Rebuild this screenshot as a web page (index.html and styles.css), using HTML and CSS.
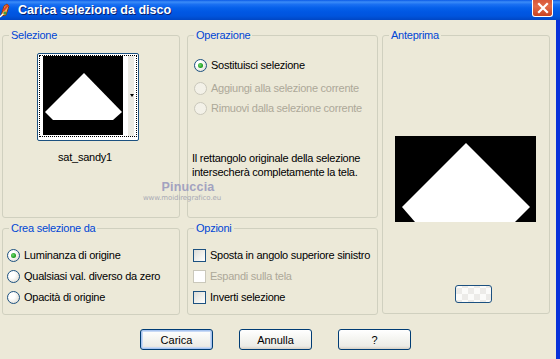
FILE: index.html
```html
<!DOCTYPE html>
<html lang="it">
<head>
  <meta charset="UTF-8">
  <meta name="viewport" content="width=device-width, initial-scale=1.0">
  <title>Carica selezione da disco</title>
  <link rel="stylesheet" href="styles.css">
</head>
<body>
  <div class="window">
    <div class="titlebar">
      <svg class="app-icon" width="12" height="16" viewBox="0 0 12 16">
        <path d="M1 14 L4 4 L7 2 L9 4 L6 13 Z" fill="#f4b35a" stroke="#8a3b12" stroke-width="1"/>
        <path d="M3 9 L8 3" stroke="#e0402a" stroke-width="2"/>
        <circle cx="5" cy="11" r="1.5" fill="#3aa04a"/>
        <path d="M0 15 L3 12" stroke="#ffffff" stroke-width="1.5"/>
      </svg>
      <span class="title">Carica selezione da disco</span>
      <button class="close" aria-label="Chiudi">
        <svg width="12" height="12" viewBox="0 0 12 12">
          <path d="M2 2 L10 10 M10 2 L2 10" stroke="#fff" stroke-width="2.2" stroke-linecap="square"/>
        </svg>
      </button>
    </div>

    <div class="frame">
      <div class="dialog">
        <div class="groups">
          <fieldset class="group sel">
            <legend>Selezione</legend>
            <div class="thumb">
              <div class="thumb-focus">
                <svg class="thumb-img" width="80" height="79" viewBox="0 0 80 79">
                  <rect width="80" height="79" fill="#000"/>
                  <polygon points="41,17 2,56 10,64 70,64 79,56" fill="#fff"/>
                </svg>
                <div class="thumb-drop"><span class="arrow"></span></div>
              </div>
            </div>
            <div class="thumb-name">sat_sandy1</div>
          </fieldset>

          <fieldset class="group op">
            <legend>Operazione</legend>
            <label class="opt first"><span class="radio on"></span>Sostituisci selezione</label>
            <label class="opt off"><span class="radio"></span>Aggiungi alla selezione corrente</label>
            <label class="opt off"><span class="radio"></span>Rimuovi dalla selezione corrente</label>
            <p class="note">Il rettangolo originale della selezione<br>intersecherà completamente la tela.</p>
          </fieldset>

          <fieldset class="group preview">
            <legend>Anteprima</legend>
            <svg class="preview-img" width="141" height="86" viewBox="0 0 141 86">
              <rect width="141" height="86" fill="#000"/>
              <polygon points="71,7 7,71 20,86 120,86 135,71" fill="#fff"/>
            </svg>
            <button class="mini"></button>
          </fieldset>

          <fieldset class="group create">
            <legend>Crea selezione da</legend>
            <label class="opt"><span class="radio on"></span>Luminanza di origine</label>
            <label class="opt"><span class="radio"></span>Qualsiasi val. diverso da zero</label>
            <label class="opt"><span class="radio"></span>Opacità di origine</label>
          </fieldset>

          <fieldset class="group opts">
            <legend>Opzioni</legend>
            <label class="opt"><span class="check"></span>Sposta in angolo superiore sinistro</label>
            <label class="opt off"><span class="check"></span>Espandi sulla tela</label>
            <label class="opt"><span class="check"></span>Inverti selezione</label>
          </fieldset>
        </div>

        <div class="buttons">
          <button class="btn default">Carica</button>
          <button class="btn">Annulla</button>
          <button class="btn">?</button>
        </div>

        <div class="watermark">
          <span class="wm-name">Pinuccia</span>
          <span class="wm-url">www.moidiregrafico.eu</span>
        </div>
      </div>
    </div>
  </div>
</body>
</html>
```

FILE: styles.css
```css
body {
  margin: 0;
  font-family: "Liberation Sans", Arial, sans-serif;
  font-size: 11px;
  letter-spacing: -0.25px;
  color: #000;
  background: #ece9d8;
}
.window {
  width: 560px;
  height: 359px;
  display: flex;
  flex-direction: column;
  overflow: hidden;
}
.titlebar {
  height: 20px;
  flex: none;
  display: flex;
  align-items: center;
  position: relative;
  background: linear-gradient(to bottom, #0a5ae6 0%, #3b8cf8 10%, #1a70f2 22%, #0560ea 40%, #0057e3 60%, #0054dd 80%, #0046c4 100%);
}
.app-icon {
  margin: 0 6px 0 0;
  flex: none;
}
.title {
  color: #fff;
  font-weight: bold;
  font-size: 12.6px;
  letter-spacing: 0;
  text-shadow: 1px 1px 0 #0a1f6e;
  margin-top: -1px;
}
.close {
  position: absolute;
  right: 7px;
  top: 0;
  width: 21px;
  height: 17px;
  padding: 0;
  border: 1px solid #fff;
  border-top: none;
  border-radius: 0 0 3px 3px;
  background: linear-gradient(to bottom, #d8583a, #e26a48 40%, #c9421f);
  display: flex;
  align-items: center;
  justify-content: center;
}
.frame {
  flex: 1;
  display: flex;
  border-right: 4px solid #0831d9;
}
.dialog {
  flex: 1;
  position: relative;
  padding: 8px 0 0 2px;
}
.groups {
  display: grid;
  grid-template-columns: 181px 191px 168px;
  grid-template-rows: 190px 94px;
  column-gap: 4px;
  row-gap: 3px;
}
.group {
  margin: 0;
  padding: 0;
  min-width: 0;
  border: 1px solid #d0d0bf;
  border-radius: 3px;
}
.group legend {
  color: #0046d5;
  line-height: 14px;
  padding: 0 2px;
  margin-left: 6px;
}
.sel,
.create {
  margin-right: 3px;
}
.preview {
  grid-column: 3;
  grid-row: 1 / 3;
  margin-bottom: 1px;
}

/* Selezione */
.sel {
  padding-top: 11px;
}
.thumb {
  width: 98px;
  height: 84px;
  border: 1px solid #1c5180;
  border-radius: 2px;
  padding: 1px;
  margin-left: 34px;
  background: #fff;
}
.thumb-focus {
  height: 80px;
  border: 1px dotted #000;
  padding-left: 3px;
  display: flex;
  background: #fff;
}
.thumb-img {
  display: block;
}
.thumb-drop {
  width: 11px;
  height: 80px;
  background: linear-gradient(to right, #fff 0, #fff 45%, #ecebe4 50%, #ecebe4 100%);
  position: relative;
}
.arrow {
  position: absolute;
  left: 7px;
  top: 38px;
  border-left: 2.5px solid transparent;
  border-right: 2.5px solid transparent;
  border-top: 3px solid #000;
}
.thumb-name {
  width: 100px;
  margin: 9px 0 0 32px;
  text-align: center;
  line-height: 14px;
}

/* option rows */
.opt {
  display: flex;
  align-items: center;
  height: 20px;
  gap: 4px;
  white-space: nowrap;
}
.opt.off {
  color: #aca899;
}
.radio {
  width: 11px;
  height: 11px;
  flex: none;
  border: 1px solid #1c5180;
  border-radius: 50%;
  background: radial-gradient(circle at 35% 35%, #ffffff 30%, #e6e4dc 75%, #d2cfc3);
  position: relative;
}
.radio.on::after {
  content: "";
  position: absolute;
  left: 3px;
  top: 3px;
  width: 5px;
  height: 5px;
  border-radius: 50%;
  background: radial-gradient(circle at 40% 40%, #72d872, #21a121 60%, #188818);
}
.off .radio {
  border-color: #cac8bb;
  background: #f3f1e8;
}
.check {
  width: 11px;
  height: 11px;
  flex: none;
  border: 1px solid #1c5180;
  background: linear-gradient(135deg, #dcdcd7 0%, #f2f2ee 60%, #ffffff 100%);
}
.off .check {
  border-color: #cac8bb;
  background: #fff;
}

/* Operazione */
.op {
  padding-top: 13px;
}
.op .opt {
  margin-left: 6px;
}
.op .first {
  margin-bottom: 3px;
}
.note {
  margin: 33px 0 0 4px;
  line-height: 14px;
}

/* Anteprima */
.preview-img {
  display: block;
  margin: 94px 0 0 12px;
}
.mini {
  display: block;
  margin: 63px 0 0 72px;
  width: 37px;
  height: 18px;
  padding: 0;
  border: 1px solid #1c5180;
  border-radius: 3px;
  background-color: #fbfbf9;
  background-image: conic-gradient(#ecebe8 25%, transparent 0 50%, #ecebe8 0 75%, transparent 0);
  background-size: 12px 12px;
  background-position: 6px 2px;
}

/* Crea selezione da / Opzioni */
.create {
  padding-top: 10px;
}
.create .opt {
  margin-left: 4px;
}
.opts {
  padding-top: 10px;
}
.opts .opt {
  margin-left: 5px;
}
.create .opt + .opt,
.opts .opt + .opt {
  margin-top: 1px;
}

/* bottom buttons */
.buttons {
  display: flex;
  gap: 26px;
  margin-top: 14px;
  padding-left: 138px;
}
.btn {
  width: 73px;
  height: 21px;
  padding: 0;
  font-family: "Liberation Sans", Arial, sans-serif;
  font-size: 11px;
  color: #000;
  border: 1px solid #003c74;
  border-radius: 3px;
  background: linear-gradient(to bottom, #ffffff 0%, #f4f4f0 50%, #ecebe6 85%, #d6d0c5 100%);
}
.btn.default {
  box-shadow: inset 0 0 0 1px #a8c4ef, inset 0 0 0 2px #c8d9f5;
}

/* watermark */
.watermark {
  position: absolute;
  left: 139px;
  top: 160px;
  width: 86px;
  display: flex;
  flex-direction: column;
  align-items: center;
  pointer-events: none;
}
.wm-name {
  font-family: "Liberation Sans", sans-serif;
  font-weight: bold;
  font-size: 12.5px;
  letter-spacing: 0.2px;
  color: #a2a2c0;
  line-height: 14px;
  margin-left: 12px;
}
.wm-url {
  font-family: "DejaVu Sans", sans-serif;
  font-size: 7px;
  letter-spacing: -0.1px;
  color: #a9a9b4;
  line-height: 9px;
}
```
